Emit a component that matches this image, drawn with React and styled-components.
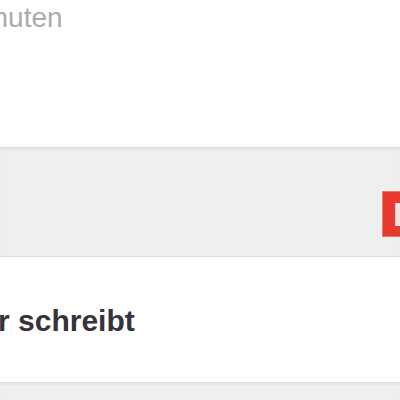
import styled, { createGlobalStyle } from "styled-components";

const Global = createGlobalStyle`
  html, body {
    margin: 0;
    padding: 0;
    background: #fff;
    overflow: hidden;
    font-family: "Liberation Sans", Arial, sans-serif;
  }
`

const Page = styled.div`
  width: 400px;
  height: 400px;
  overflow: hidden;
  display: flex;
  flex-direction: column;
`

const TimeRow = styled.div`
  height: 147px;
  padding-top: 2px;
  box-sizing: border-box;
  flex-shrink: 0;
`

const TimeText = styled.div`
  font-size: 28px;
  line-height: 32px;
  color: #ababab;
  margin-left: -37px;
  white-space: nowrap;
`

const Panel = styled.div`
  flex-shrink: 0;
  height: ${p => p.$h}px;
  box-sizing: border-box;
  background: #efefef;
  border-top: 1px solid #dcdcdc;
  border-bottom: ${p => (p.$last ? "none" : "1px solid #dcdcdc")};
  box-shadow: inset 0 2px 2px rgba(0, 0, 0, 0.04);
  display: flex;
  justify-content: flex-end;
  align-items: flex-start;
  padding-top: 43px;
`

const DeleteButton = styled.button`
  height: 46px;
  width: 120px;
  margin-right: -102px;
  border: 1px solid #f07a6a;
  background: #e63a2e;
  color: #fbe3e0;
  font-family: "Liberation Sans", Arial, sans-serif;
  font-weight: bold;
  font-size: 34px;
  line-height: 44px;
  text-align: left;
  padding: 0 0 0 10px;
  box-sizing: border-box;
`

const AuthorRow = styled.div`
  flex-shrink: 0;
  height: 125px;
  box-sizing: border-box;
  padding-top: 46px;
  background: #fff;
`

const AuthorText = styled.div`
  font-size: 30px;
  line-height: 36px;
  font-weight: bold;
  color: #36333a;
  margin-left: -2px;
  white-space: nowrap;
`

export default function App() {
  return (
    <Page>
      <Global />
      <TimeRow>
        <TimeText>Minuten</TimeText>
      </TimeRow>
      <Panel $h={110}>
        <DeleteButton>L</DeleteButton>
      </Panel>
      <AuthorRow>
        <AuthorText>r schreibt</AuthorText>
      </AuthorRow>
      <Panel $h={20} $last />
    </Page>
  )
}
